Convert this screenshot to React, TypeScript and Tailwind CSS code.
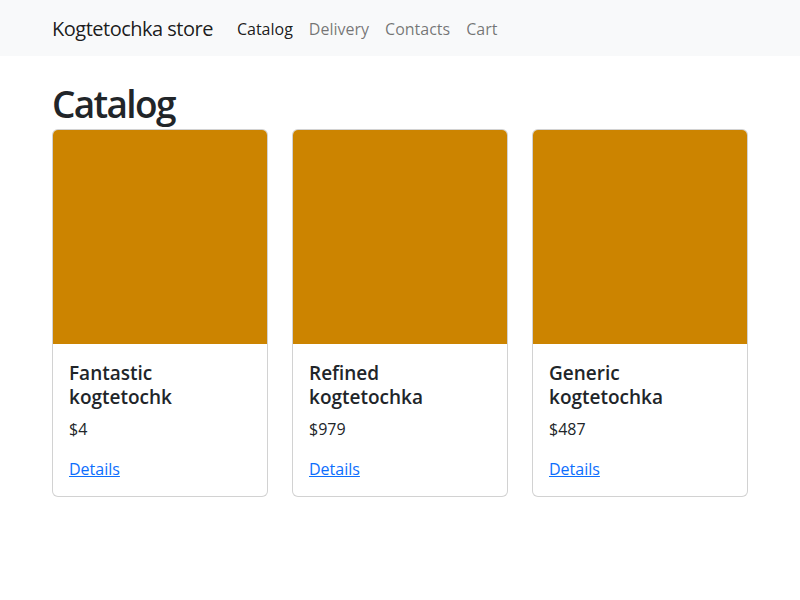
import React from "react";

const items = [
  { title: "Fantastic kogtetochk", price: "$4" },
  { title: "Refined kogtetochka", price: "$979" },
  { title: "Generic kogtetochka", price: "$487" },
];

export default function App() {
  return (
    <div className="min-h-[600px] bg-white text-[#212529]" style={{ fontFamily: '"Open Sans", "Noto Sans", sans-serif' }}>
      <nav className="bg-[#f8f9fa] py-2">
        <div className="mx-auto flex w-[720px] items-center px-3">
          <span className="mr-4 pb-[4px] pt-[6px] text-[20px] leading-[30px] tracking-[-0.025em] text-black/90">Kogtetochka store</span>
          <div className="flex">
            <a className="px-2 pb-[7px] pt-[9px] text-[16px] leading-6 text-black/90">Catalog</a>
            <a className="px-2 pb-[7px] pt-[9px] text-[16px] leading-6 text-black/55">Delivery</a>
            <a className="px-2 pb-[7px] pt-[9px] text-[16px] leading-6 text-black/55">Contacts</a>
            <a className="px-2 pb-[7px] pt-[9px] text-[16px] leading-6 text-black/55">Cart</a>
          </div>
        </div>
      </nav>
      <main className="mx-auto w-[720px] px-3">
        <h1 className="mb-0 mt-[24px] text-[37px] font-semibold leading-[47px] tracking-[-0.045em]">Catalog</h1>
        <div className="mt-[2px] grid grid-cols-3 gap-6">
          {items.map((it) => (
            <div key={it.title} className="overflow-hidden rounded-md border border-black/[0.175] bg-white">
              <div className="h-[214px] bg-[#cc8400]" />
              <div className="px-4 pb-[15px] pt-[17px]">
                <h5 className="mb-2 text-[19px] font-semibold leading-6">{it.title}</h5>
                <p className="mb-4 text-[16px] leading-6">{it.price}</p>
                <a className="text-[16px] leading-6 text-[#0d6efd] underline">Details</a>
              </div>
            </div>
          ))}
        </div>
      </main>
    </div>
  );
}
